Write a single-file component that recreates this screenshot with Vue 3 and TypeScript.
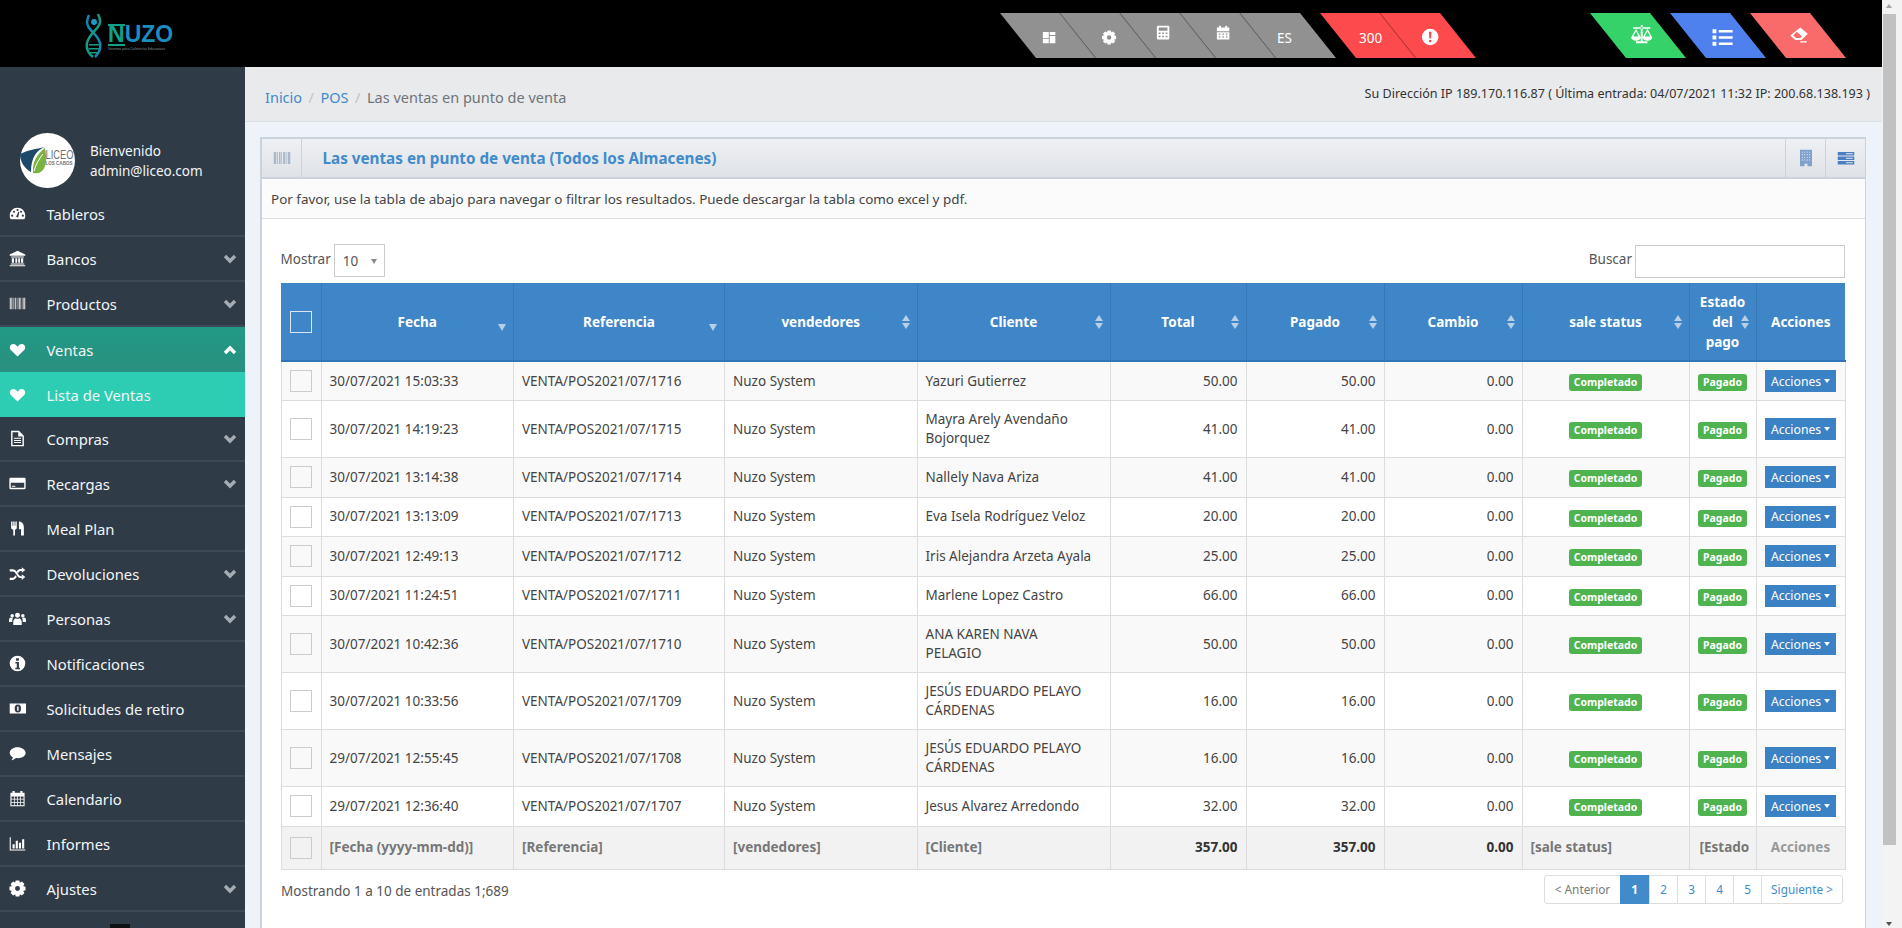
<template>
  <div class="page">
    <div class="shell">
      <header class="topbar">
        <div class="logo">
          <svg class="dna" viewBox="0 0 18 46">
            <path d="M4 2C2 6 1 9 3 13c2 5 10 9 12 17 1 5-1 10-5 14" fill="none" stroke="#1487b0" stroke-width="2.500" />
            <path d="M13 1c2 4 3 8 1 11-2 5-10 9-12 18-1 5 1 10 6 14" fill="none" stroke="#149a86" stroke-width="2.500" />
            <circle cx="9" cy="9" r="3" fill="#1c9ac4" />
            <path d="M4 31h10v1.500H4zM3.500 35h11v1.500h-11zM5 39h8v1.500H5z" fill="#149a86" />
          </svg>
          <div class="logo-text">
            <div class="logo-name"><span class="logo-n">N</span>UZO</div>
            <div class="logo-sub">Sistema para Cafeterías Educativas</div>
          </div>
        </div>
        <div class="shortcuts">
          <a v-for="t in toolCells" :key="t.name" class="skew grey">
            <span :class="['unskew', t.cls]">
              <svg v-if="t.icon" class="top-icon" :class="t.icon" viewBox="0 0 24 24"><path :d="icons[t.icon]" /></svg>
              <template v-else>{{ t.name }}</template>
            </span>
          </a>
        </div>
        <div class="shortcuts alerts">
          <a class="skew red"><span class="unskew count">300</span></a>
          <a class="skew red">
            <span class="unskew warn"><svg class="top-icon round" viewBox="0 0 24 24"><path :d="icons.alert" /></svg></span>
          </a>
        </div>
        <div class="shortcuts extras">
          <a class="skew green"><span class="unskew scale"><svg class="top-icon big" viewBox="0 0 24 24"><path :d="icons.scales" /></svg></span></a>
          <a class="skew blue"><span class="unskew lines"><svg class="top-icon big" viewBox="0 0 24 24"><path :d="icons.list" /></svg></span></a>
          <a class="skew salmon"><span class="unskew erase"><svg class="top-icon mid" viewBox="0 0 24 24"><path :d="icons.eraser" /></svg></span></a>
        </div>
      </header>

      <div class="body">
        <aside class="sidebar">
          <div class="user">
            <svg class="avatar" viewBox="0 0 55 55">
              <circle cx="27.500" cy="27.500" r="27.500" fill="#fff" />
              <path d="M0 21c8-4 16-5 25-7-8 3-14 10-14 25C5 36 0 29 0 21z" fill="#1d4a6b" />
              <path d="M25 15C17 21 12 29 13 40c9 2 16-5 12-25z" fill="#7bb342" />
              <path d="M14 38c2-7 5-12 9-17" fill="none" stroke="#fff" stroke-width="1" />
              <text x="25.500" y="26" textLength="28" lengthAdjust="spacingAndGlyphs" class="avatar-main">LICEO</text>
              <text x="25.500" y="32" textLength="27" lengthAdjust="spacingAndGlyphs" class="avatar-small">LOS CABOS</text>
            </svg>
            <div class="user-text">
              <div>Bienvenido</div>
              <div>admin@liceo.com</div>
            </div>
          </div>
          <nav>
            <a
              v-for="m in menu"
              :key="m.label"
              :class="['item', { open: m.open, current: m.current }]"
            >
              <svg class="item-icon" :class="{ faded: m.icon === 'barcode' }" viewBox="0 0 24 24"><path :d="icons[m.icon]" /></svg>
              <span class="item-label">{{ m.label }}</span>
              <svg v-if="m.arrow" class="chevron" viewBox="0 0 14 10">
                <path :d="m.open ? 'M2 8l5-5 5 5' : 'M2 2l5 5 5-5'" />
              </svg>
            </a>
          </nav>
          <div class="to-top"></div>
        </aside>

        <main class="main">
          <div class="crumbs">
            <div class="trail">
              <a>Inicio</a><i>/</i><a>POS</a><i>/</i><span>Las ventas en punto de venta</span>
            </div>
            <div class="ip">Su Dirección IP 189.170.116.87 ( Última entrada: 04/07/2021 11:32 IP: 200.68.138.193 )</div>
          </div>

          <section class="box">
            <div class="box-head">
              <div class="head-cell left">
                <svg class="head-icon barcode" viewBox="0 0 24 24"><path :d="icons.barcode" /></svg>
              </div>
              <h2>Las ventas en punto de venta (Todos los Almacenes)</h2>
              <div class="head-cell">
                <svg class="head-icon pale" viewBox="0 0 24 24"><path :d="icons.building" /></svg>
              </div>
              <div class="head-cell">
                <svg class="head-icon" viewBox="0 0 24 24"><path :d="icons.tasks" /></svg>
              </div>
            </div>
            <p class="intro">Por favor, use la tabla de abajo para navegar o filtrar los resultados. Puede descargar la tabla como excel y pdf.</p>

            <div class="box-body">
              <div class="controls">
                <label class="length">Mostrar
                  <span class="select">10<b></b></span>
                </label>
                <label class="search">Buscar
                  <input type="text" />
                </label>
              </div>

              <table class="sales">
                <colgroup>
                  <col v-for="(w, i) in colWidths" :key="i" :style="{ width: w + 'px' }" />
                </colgroup>
                <thead>
                  <tr>
                    <th><span class="check head"></span></th>
                    <th v-for="h in headers" :key="h.label">
                      {{ h.label }}
                      <span v-if="h.sort" :class="['sort', h.sort]"></span>
                    </th>
                  </tr>
                </thead>
                <tbody>
                  <tr v-for="r in rows" :key="r.ref">
                    <td class="center"><span class="check"></span></td>
                    <td>{{ r.date }}</td>
                    <td>{{ r.ref }}</td>
                    <td>Nuzo System</td>
                    <td class="client">{{ r.client }}</td>
                    <td class="num">{{ r.total }}</td>
                    <td class="num">{{ r.total }}</td>
                    <td class="num">0.00</td>
                    <td class="center"><span class="tag">Completado</span></td>
                    <td class="center"><span class="tag">Pagado</span></td>
                    <td class="center"><a class="btn">Acciones<b></b></a></td>
                  </tr>
                </tbody>
                <tfoot>
                  <tr>
                    <td class="center"><span class="check"></span></td>
                    <td>[Fecha (yyyy-mm-dd)]</td>
                    <td>[Referencia]</td>
                    <td>[vendedores]</td>
                    <td>[Cliente]</td>
                    <td class="num dark">357.00</td>
                    <td class="num dark">357.00</td>
                    <td class="num dark">0.00</td>
                    <td>[sale status]</td>
                    <td class="clip">[Estado</td>
                    <td class="center soft">Acciones</td>
                  </tr>
                </tfoot>
              </table>

              <div class="table-foot">
                <div class="info">Mostrando 1 a 10 de entradas 1;689</div>
                <div class="pager">
                  <a class="muted">&lt; Anterior</a>
                  <a class="active">1</a>
                  <a>2</a>
                  <a>3</a>
                  <a>4</a>
                  <a>5</a>
                  <a>Siguiente &gt;</a>
                </div>
              </div>
            </div>
          </section>
        </main>
      </div>
    </div>
    <div class="scrollbar">
      <span class="arrow up"></span>
      <span class="thumb"></span>
      <span class="arrow down"></span>
    </div>
  </div>
</template>

<script setup lang="ts">
interface MenuItem {
  label: string;
  icon: string;
  arrow?: boolean;
  open?: boolean;
  current?: boolean;
}

interface Sale {
  date: string;
  ref: string;
  client: string;
  total: string;
}

// arma un engranaje de 8 dientes con agujero central
const gear = (): string => {
  const pts: string[] = [];
  for (let i = 0; i < 8; i++) {
    const a = (i * Math.PI) / 4;
    const spots: [number, number][] = [[8.6, -0.42], [11.6, -0.22], [11.6, 0.22], [8.6, 0.42]];
    for (const [r, d] of spots) {
      pts.push(`${(12 + r * Math.cos(a + d)).toFixed(2)} ${(12 + r * Math.sin(a + d)).toFixed(2)}`);
    }
  }
  return `M${pts.join('L')}zM8.500 12a3.500 3.500 0 1 0 7 0a3.500 3.500 0 1 0-7 0z`;
};

const calendarGrid = 'M3.500 9v3.500h4V9zM8.500 9v3.500h3V9zM12.500 9v3.500h3V9zM16.500 9v3.500h4V9zM3.500 13.500V17h4v-3.500zM8.500 13.500V17h3v-3.500zM12.500 13.500V17h3v-3.500zM16.500 13.500V17h4v-3.500zM3.500 18v3.500h4V18zM8.500 18v3.500h3V18zM12.500 18v3.500h3V18zM16.500 18v3.500h4V18z';

const icons: Record<string, string> = {
  gauge: 'M12 4C5.900 4 1 8.900 1 15c0 1.900.5 3.700 1.400 5.200h19.200c.9-1.500 1.400-3.300 1.400-5.200C23 8.900 18.100 4 12 4zM3 15a1.500 1.500 0 1 0 3 0a1.500 1.500 0 1 0-3 0zM5.500 9.500a1.500 1.500 0 1 0 3 0a1.500 1.500 0 1 0-3 0zM10.500 7a1.500 1.500 0 1 0 3 0a1.500 1.500 0 1 0-3 0zM15.500 9.500a1.500 1.500 0 1 0 3 0a1.500 1.500 0 1 0-3 0zM18 15a1.500 1.500 0 1 0 3 0a1.500 1.500 0 1 0-3 0zM10 17l3-7.500 1.500.5-1.500 7.500z',
  bank: 'M12 1 1 6.500V8h22V6.500zM3 9h18v1.500H3zM4 11.500h3V18H4zM9 11.500h2.500V18H9zM13 11.500h2.500V18H13zM17 11.500h3V18h-3zM2.500 19h19v1.500h-19zM1 21.500h22V23H1z',
  barcode: 'M1 4h3v16H1zM5 4h1.500v16H5zM8 4h2v16H8zM11 4h1v16h-1zM13.500 4h3v16h-3zM18 4h1v16h-1zM20 4h3v16h-3z',
  heart: 'M12 22 2.600 12.700C.8 10.900.7 8 2.300 6 4.200 3.700 7.700 3.600 9.800 5.700L12 8l2.200-2.300c2.100-2.100 5.600-2 7.500.3 1.600 2 1.500 4.900-.3 6.700z',
  file: 'M3 1h11l7 7v15H3zM5 3v18h14V9h-6V3zM7 11h10v1.500H7zM7 14h10v1.500H7zM7 17h10v1.500H7z',
  card: 'M2 4h20a1.500 1.500 0 0 1 1.500 1.500v13A1.500 1.500 0 0 1 22 20H2a1.500 1.500 0 0 1-1.500-1.500v-13A1.500 1.500 0 0 1 2 4zM2.500 11v7h19v-7zM4 15h5v1.500H4z',
  cutlery: 'M3 2h2v6h1V2h2v6h1V2h2v9c0 1.500-1 2.500-2.500 2.500V22H6v-8.500C4 13.500 3 12.500 3 11zM14 2c4 0 7 3 7 9v11h-4v-9h-3z',
  shuffle: 'M1 6h4.500c2 0 3.300 1 4.500 2.500l4 5.500c1 1.300 2 1.800 3 1.800h1V13l5 4-5 4v-2.700h-1.500c-2 0-3.300-1-4.500-2.500l-4-5.500C7 9.500 6.200 9 5 9H1zM1 18h4c1.200 0 2-.6 2.700-1.500l1.500-2 1.800 2.500-1.300 1.500C8.500 20 7 21 5.500 21H1zM18 3l5 4-5 4V8.500h-1.500c-1 0-1.800.5-2.500 1.300l-1.300 1.700-1.900-2.500 1-1.300C13 6.200 14.500 5.500 16.500 5.500H18z',
  users: 'M8.500 7.500a3.500 3.500 0 1 0 7 0a3.500 3.500 0 1 0-7 0zM6 21v-4c0-3 2-5 3.500-5.500 1.500 1 3.500 1 5 0 1.500.5 3.500 2.500 3.500 5.500v4zM2 8a2.500 2.500 0 1 0 5 0a2.500 2.500 0 1 0-5 0zM17 8a2.500 2.500 0 1 0 5 0a2.500 2.500 0 1 0-5 0zM0 17v-3c0-2 1-3 2.500-3.500 1 .7 2 .7 3.200.5C5 12 4.500 14 4.500 17zM24 17v-3c0-2-1-3-2.500-3.500-1 .7-2 .7-3.200.5.7 1 1.200 3 1.200 6z',
  info: 'M12 1a11 11 0 1 0 0 22a11 11 0 0 0 0-22zM10 4.500h4V8h-4zM9 10h5v8h1.500v2h-6.500v-2H11v-6H9z',
  money: 'M1 5h23v14H1zM8 12a4.500 5.500 0 1 0 9 0a4.500 5.500 0 1 0-9 0zM11.500 9h2v6h-2z',
  comment: 'M12 3C5.900 3 1 6.600 1 11c0 2.700 1.800 5 4.500 6.500-.3 1.500-1.200 3-2.500 4 2.500-.2 5-1.300 6.800-3 .9.1 1.800.2 2.700.2 6.100 0 11-3.300 11-7.700S18.100 3 12 3z',
  calendar: `M2 4h3V1.500h3V4h8V1.500h3V4h3v19H2z${calendarGrid}`,
  bars: 'M1 3h1.500v17.500H23V22H1zM5 13h3v6H5zM9.500 8h3v11h-3zM14 11h3v8h-3zM18.500 6h3v13h-3z',
  cog: gear(),
  dash: 'M2 3h9.500v10H2zM13 3h9v5h-9zM13 9.500h9V21h-9zM2 14.500h9.500V21H2z',
  calc: 'M4 1h16a2 2 0 0 1 2 2v18a2 2 0 0 1-2 2H4a2 2 0 0 1-2-2V3a2 2 0 0 1 2-2zM5 4v5h14V4zM5 12v2.500h3V12zM10.500 12v2.500h3V12zM16 12v2.500h3V12zM5 17v2.500h3V17zM10.500 17v2.500h3V17zM16 17v2.500h3V17z',
  cal: 'M2 4h3.500V1h3v3h7V1h3v3H22v6H2zM2 11.500h20V23H2zM5 13.500v2h2.500v-2zM10.700 13.500v2h2.600v-2zM16.500 13.500v2H19v-2zM5 18v2h2.500v-2zM10.700 18v2h2.600v-2zM16.500 18v2H19v-2z',
  alert: 'M12 1a11 11 0 1 0 0 22a11 11 0 0 0 0-22zM10.300 5h3.400l-.5 9h-2.400zM10.500 16h3v3h-3z',
  scales: 'M11 2h2v17h-2zM3 4.500h18V6H3zM6 19h12v2H6zM6 6 1 15a5 3.500 0 0 0 10 0zM6 8.500 3.200 14h5.600zM18 6l-5 9a5 3.500 0 0 0 10 0zM18 8.500 15.200 14h5.600z',
  list: 'M2 3.500h4v4H2zM8.500 4.300H23v2.400H8.500zM2 10h4v4H2zM8.500 10.800H23v2.400H8.500zM2 16.500h4v4H2zM8.500 17.300H23v2.400H8.500z',
  eraser: 'M14 3l9 7.500-7.500 7.500H8l-6-5.500zM5.500 12.500l3.500 3h5l2-2-6.500-5.500zM14 19.500h8V21h-8z',
  building: 'M4 1h16v22h-6v-3.500h-4V23H4zM6.500 3.500v1.300H8V3.500zM9.500 3.500v1.300H11V3.500zM13 3.500v1.300h1.500V3.500zM16 3.500v1.300h1.500V3.500zM6.500 7v1.300H8V7zM9.500 7v1.300H11V7zM13 7v1.300h1.500V7zM16 7v1.300h1.500V7zM6.500 10.500v1.300H8v-1.300zM9.500 10.500v1.300H11v-1.300zM13 10.500v1.300h1.500v-1.300zM16 10.500v1.300h1.500v-1.300zM6.500 14v1.300H8V14zM9.500 14v1.300H11V14zM13 14v1.300h1.500V14zM16 14v1.300h1.500V14z',
  tasks: 'M1 4h22v4.500H1zM12 5.500V7h9V5.500zM1 10h22v4.500H1zM12 11.500V13h9v-1.500zM1 16h22v4.500H1zM12 17.500V19h9v-1.500z',
};

const toolCells = [
  { name: 'dash', icon: 'dash', cls: 'low' },
  { name: 'cog', icon: 'cog', cls: 'low' },
  { name: 'calc', icon: 'calc', cls: 'shift' },
  { name: 'cal', icon: 'cal', cls: 'shift' },
  { name: 'ES', icon: '', cls: 'lang' },
];

const menu: MenuItem[] = [
  { label: 'Tableros', icon: 'gauge' },
  { label: 'Bancos', icon: 'bank', arrow: true },
  { label: 'Productos', icon: 'barcode', arrow: true },
  { label: 'Ventas', icon: 'heart', arrow: true, open: true },
  { label: 'Lista de Ventas', icon: 'heart', current: true },
  { label: 'Compras', icon: 'file', arrow: true },
  { label: 'Recargas', icon: 'card', arrow: true },
  { label: 'Meal Plan', icon: 'cutlery' },
  { label: 'Devoluciones', icon: 'shuffle', arrow: true },
  { label: 'Personas', icon: 'users', arrow: true },
  { label: 'Notificaciones', icon: 'info' },
  { label: 'Solicitudes de retiro', icon: 'money' },
  { label: 'Mensajes', icon: 'comment' },
  { label: 'Calendario', icon: 'calendar' },
  { label: 'Informes', icon: 'bars' },
  { label: 'Ajustes', icon: 'cog', arrow: true },
];

const colWidths: number[] = [40, 192.5, 211, 192.5, 193, 136, 138, 138, 167, 67, 89];

const headers = [
  { label: 'Fecha', sort: 'desc' },
  { label: 'Referencia', sort: 'desc' },
  { label: 'vendedores', sort: 'both' },
  { label: 'Cliente', sort: 'both' },
  { label: 'Total', sort: 'both' },
  { label: 'Pagado', sort: 'both' },
  { label: 'Cambio', sort: 'both' },
  { label: 'sale status', sort: 'both' },
  { label: 'Estado del pago', sort: 'both' },
  { label: 'Acciones', sort: '' },
];

const rows: Sale[] = [
  { date: '30/07/2021 15:03:33', ref: 'VENTA/POS2021/07/1716', client: 'Yazuri Gutierrez', total: '50.00' },
  { date: '30/07/2021 14:19:23', ref: 'VENTA/POS2021/07/1715', client: 'Mayra Arely Avendaño\nBojorquez', total: '41.00' },
  { date: '30/07/2021 13:14:38', ref: 'VENTA/POS2021/07/1714', client: 'Nallely Nava Ariza', total: '41.00' },
  { date: '30/07/2021 13:13:09', ref: 'VENTA/POS2021/07/1713', client: 'Eva Isela Rodríguez Veloz', total: '20.00' },
  { date: '30/07/2021 12:49:13', ref: 'VENTA/POS2021/07/1712', client: 'Iris Alejandra Arzeta Ayala', total: '25.00' },
  { date: '30/07/2021 11:24:51', ref: 'VENTA/POS2021/07/1711', client: 'Marlene Lopez Castro', total: '66.00' },
  { date: '30/07/2021 10:42:36', ref: 'VENTA/POS2021/07/1710', client: 'ANA KAREN NAVA\nPELAGIO', total: '50.00' },
  { date: '30/07/2021 10:33:56', ref: 'VENTA/POS2021/07/1709', client: 'JESÚS EDUARDO PELAYO\nCÁRDENAS', total: '16.00' },
  { date: '29/07/2021 12:55:45', ref: 'VENTA/POS2021/07/1708', client: 'JESÚS EDUARDO PELAYO\nCÁRDENAS', total: '16.00' },
  { date: '29/07/2021 12:36:40', ref: 'VENTA/POS2021/07/1707', client: 'Jesus Alvarez Arredondo', total: '32.00' },
];
</script>

<style scoped>
.page {
  display: flex;
  width: 1902px;
  height: 928px;
  overflow: hidden;
  font-family: "Noto Sans", "Open Sans", sans-serif;
  font-size: 13.5px;
  color: #444;
}

.shell {
  flex: 1;
  min-width: 0;
  display: flex;
  flex-direction: column;
}

/* barra superior */
.topbar {
  height: 67px;
  flex: none;
  background: #000;
  display: flex;
  align-items: flex-start;
}

.logo {
  width: 1018px;
  padding: 13px 0 0 85px;
  box-sizing: border-box;
  display: flex;
  gap: 5px;
}

.dna {
  width: 18px;
  height: 46px;
}

.logo-text {
  padding-top: 10px;
  width: 66px;
}

.logo-name {
  font: bold 23px/23px "Liberation Sans", sans-serif;
  color: #1b8dc0;
  letter-spacing: 0;
}

.logo-n {
  color: #12a089;
  border-top: 2px solid #12a089;
  border-bottom: 2px solid #12a089;
  display: inline-block;
  line-height: 17px;
  height: 18px;
}

.logo-sub {
  font-size: 3.500px;
  line-height: 5px;
  color: #8a8f94;
  white-space: nowrap;
}

.shortcuts {
  display: flex;
  margin-top: 13px;
}

.alerts {
  margin-left: 20px;
}

.extras {
  margin-left: 150px;
  gap: 20px;
}

.skew {
  width: 60px;
  height: 45px;
  transform: skewX(38.66deg);
  display: flex;
  align-items: center;
  justify-content: center;
  color: #fff;
  font-size: 13.5px;
  border-right: 1px solid rgba(0, 0, 0, 0.25);
  box-sizing: border-box;
}

.skew:last-child,
.extras .skew {
  border-right: none;
}

.grey { background: #919191; }
.red { background: #fd4b4d; }
.green { background: #34d268; }
.blue { background: #4f81ee; }
.salmon { background: #f96a6a; }

.unskew {
  transform: skewX(-38.66deg);
  display: flex;
  align-items: center;
}

.low { margin-top: 3px; }
.shift { margin: -7px 4px 0 0; }
.lang { margin: 5px 12px 0 0; }
.count { margin: 5px 0 0 2px; }
.warn { margin: 3px 0 0 2px; }
.scale { margin: -3px 0 0 8px; }
.lines { margin: 3px 0 0 4px; }
.erase { margin: -1px 0 0 2px; }

.top-icon {
  width: 15px;
  height: 15px;
  fill: #fff;
  fill-rule: evenodd;
}

.top-icon.round {
  width: 18px;
  height: 18px;
}

.top-icon.mid {
  width: 20px;
  height: 20px;
}

.top-icon.big {
  width: 23px;
  height: 23px;
}

/* menú lateral */
.body {
  flex: 1;
  min-height: 0;
  display: flex;
}

.sidebar {
  width: 245px;
  flex: none;
  background: #2f3b47;
  position: relative;
  color: #f2f5f7;
}

.user {
  height: 125px;
  padding: 66px 0 0 20px;
  box-sizing: border-box;
  display: flex;
  gap: 15px;
}

.avatar {
  width: 55px;
  height: 55px;
  flex: none;
}

.avatar-main {
  font: 12px "Liberation Sans", sans-serif;
  fill: #6b7378;
}

.avatar-small {
  font: bold 5px "Liberation Sans", sans-serif;
  fill: #6b7378;
}

.user-text {
  padding-top: 8px;
  font-size: 13.500px;
  line-height: 20px;
}

.item {
  height: 45px;
  box-sizing: border-box;
  border-bottom: 2px solid #3d4956;
  display: flex;
  align-items: center;
  font-size: 14.800px;
}

.item.open {
  background: linear-gradient(#219a85, #2a8f7f);
  border-bottom: none;
}

.item.current {
  background: #2ccdb2;
  border-bottom: none;
}

.item-icon {
  width: 17px;
  height: 17px;
  margin-left: 9px;
  fill: #fff;
  fill-rule: evenodd;
  flex: none;
}

.item-icon.faded {
  fill: #c4c4c4;
}

.item-label {
  margin: 1px 0 0 20.500px;
  flex: 1;
}

.chevron {
  width: 14px;
  height: 10px;
  margin-right: 8px;
  fill: none;
  stroke: #a5acb3;
  stroke-width: 3.400;
}

.open .chevron {
  stroke: #fff;
}

.to-top {
  position: absolute;
  left: 110px;
  bottom: 0;
  width: 20px;
  height: 4px;
  background: #111;
}

/* contenido */
.main {
  flex: 1;
  min-width: 0;
  background: #eef3f9;
  overflow: hidden;
}

.crumbs {
  height: 55px;
  box-sizing: border-box;
  background: #e9eaec;
  border-bottom: 1px solid #dcdfe2;
  padding: 0 12px 0 20px;
  display: flex;
  justify-content: space-between;
  align-items: center;
}

.trail {
  font-size: 14.500px;
  color: #6e7479;
  padding-top: 5px;
}

.trail a {
  color: #428bca;
}

.trail i {
  font-style: normal;
  color: #c4c4c4;
  margin: 0 6.500px;
}

.ip {
  font-size: 12.550px;
  color: #333;
  margin-bottom: 2px;
}

.box {
  margin: 15px 16px 0 15px;
  background: #fff;
  border: 2px solid #ccd2d9;
  border-width: 2px 1px 0 2px;
  height: 800px;
}

.box-head {
  height: 38px;
  background: linear-gradient(#eef0f4, #dfe2e6);
  border-bottom: 2px solid #ccd2d9;
  display: flex;
  align-items: stretch;
  box-sizing: content-box;
}

.head-cell {
  width: 39px;
  border-left: 1px solid #ccd2d9;
  display: flex;
  align-items: center;
  justify-content: center;
}

.head-cell.left {
  border-left: none;
  border-right: 1px solid #ccd2d9;
}

.head-icon {
  width: 18px;
  height: 18px;
  fill: #4a7fbf;
  fill-rule: evenodd;
}

.head-icon.barcode {
  fill: #a9b9cb;
}

.head-icon.pale {
  fill: #7fa2cd;
}

h2 {
  flex: 1;
  margin: 0 0 0 20.500px;
  font-size: 15.250px;
  line-height: 38px;
  font-weight: 700;
  color: #428bca;
}

.intro {
  margin: 0;
  height: 40px;
  box-sizing: border-box;
  padding: 0 9px;
  line-height: 40px;
  font-size: 13.450px;
  background: #fbfbfb;
  border-bottom: 1px solid #ddd;
  color: #444;
}

.box-body {
  padding: 25px 20px 0 19px;
}

.controls {
  height: 39px;
  display: flex;
  justify-content: space-between;
  align-items: flex-start;
}

.length,
.search {
  display: flex;
  align-items: flex-start;
  line-height: 31px;
  gap: 3px;
  color: #555;
}

.length {
  margin-left: -0.5px;
}

.select {
  width: 51px;
  height: 33px;
  box-sizing: border-box;
  border: 1px solid #ccc;
  padding: 2px 0 0 8px;
  display: flex;
  align-items: center;
  justify-content: space-between;
  color: #555;
}

.select b {
  width: 0;
  height: 0;
  border: 3.500px solid transparent;
  border-top: 5px solid #888;
  border-bottom: 0;
  margin-right: 7px;
}

.search input {
  width: 210px;
  height: 33px;
  box-sizing: border-box;
  border: 1px solid #ccc;
  outline: none;
  margin-top: 1px;
}

/* tabla */
.sales {
  width: 1564px;
  margin-left: -0.5px;
  table-layout: fixed;
  border-collapse: collapse;
}

.sales th {
  position: relative;
  height: 78px;
  box-sizing: border-box;
  padding: 0 8px;
  background: #3f86c8;
  color: #fff;
  font-size: 13.500px;
  line-height: 20px;
  font-weight: 700;
  border-right: 1px solid #3578b5;
  border-bottom: 2px solid #2f76b8;
  text-align: center;
}

.sales th:first-child {
  padding: 0;
}

.sales th:last-child {
  border-right: none;
}

.sales td {
  padding: 9px 8px;
  line-height: 19px;
  border: 1px solid #ddd;
  color: #444;
}

.sales td.client {
  white-space: pre-line;
}

.sales tbody tr {
  height: 39.500px;
}

.sales tbody tr:nth-child(odd) {
  background: #f9f9f9;
}

.sales tbody tr:nth-child(even) {
  background: #fff;
}

.sales td.center {
  text-align: center;
  padding: 0 4px;
}

.sales td.num {
  text-align: right;
}

.sales tfoot tr {
  height: 43px;
  background: #f2f2f2;
}

.sales tfoot td {
  color: #777;
  font-weight: 700;
  white-space: nowrap;
}

.sales tfoot td.dark {
  color: #333;
}

.sales tfoot td.soft {
  color: #999;
}

.sales tfoot td.clip {
  padding-left: 10px;
}

.check {
  display: block;
  width: 22px;
  height: 22px;
  margin: 0 auto;
  box-sizing: border-box;
  border: 1px solid #ccc;
}

.check.head {
  border-color: #dbe7f3;
}

.sort {
  position: absolute;
  right: 7px;
  top: 50%;
}

.sort::before,
.sort::after {
  content: "";
  position: absolute;
  right: 0;
  width: 0;
  height: 0;
  border-left: 4.500px solid transparent;
  border-right: 4.500px solid transparent;
}

.sort.desc::after {
  top: 2px;
  border-top: 7px solid #b7cfe7;
}

.sort.both::before {
  top: -7px;
  border-bottom: 6px solid #b7cfe7;
}

.sort.both::after {
  top: 1px;
  border-top: 6px solid #b7cfe7;
}

.tag {
  display: inline-block;
  min-width: 38px;
  padding: 0 5px;
  height: 17px;
  margin-top: 2px;
  line-height: 17px;
  border-radius: 3px;
  background: #4fb350;
  color: #fff;
  font-size: 10.500px;
  font-weight: 700;
  vertical-align: middle;
}

.btn {
  display: inline-flex;
  align-items: center;
  justify-content: center;
  width: 71px;
  height: 22px;
  background: #3b82c4;
  color: #fff;
  font-size: 12.200px;
  vertical-align: middle;
}

.btn b {
  width: 0;
  height: 0;
  margin-left: 3px;
  border: 3.500px solid transparent;
  border-top: 4px solid #fff;
  border-bottom: 0;
}

.table-foot {
  display: flex;
  justify-content: space-between;
  padding-top: 5px;
}

.info {
  padding-top: 7px;
  color: #555;
}

.pager {
  display: flex;
  height: 29px;
  margin-right: 2px;
  font-size: 11.800px;
  border: 1px solid #ddd;
  border-radius: 3px;
  box-sizing: border-box;
}

.pager a {
  display: flex;
  align-items: center;
  justify-content: center;
  padding: 0 6px;
  min-width: 28px;
  box-sizing: border-box;
  color: #428bca;
  border-left: 1px solid #ddd;
}

.pager a:first-child {
  border-left: none;
  width: 75px;
}

.pager a.muted {
  color: #777;
}

.pager a.active {
  background: #428bca;
  color: #fff;
  font-weight: 700;
  border-left: none;
  margin: -1px 0;
  width: 29px;
}

.pager a:last-child {
  width: 81px;
}

/* barra de desplazamiento */
.scrollbar {
  width: 20px;
  flex: none;
  background: #f3f3f3;
  position: relative;
}

.thumb {
  display: block;
  width: 13px;
  height: 831px;
  margin: 14px 0 0 1px;
  background: #c1c1c1;
}

.arrow {
  position: absolute;
  left: 4px;
  width: 0;
  height: 0;
  border-left: 3.500px solid transparent;
  border-right: 3.500px solid transparent;
}

.arrow.up {
  top: 4px;
  border-bottom: 4px solid #a3a3a3;
}

.arrow.down {
  bottom: 2px;
  border-top: 4px solid #505050;
}
</style>

<style>
html,
body {
  margin: 0;
  overflow: hidden;
}
</style>
